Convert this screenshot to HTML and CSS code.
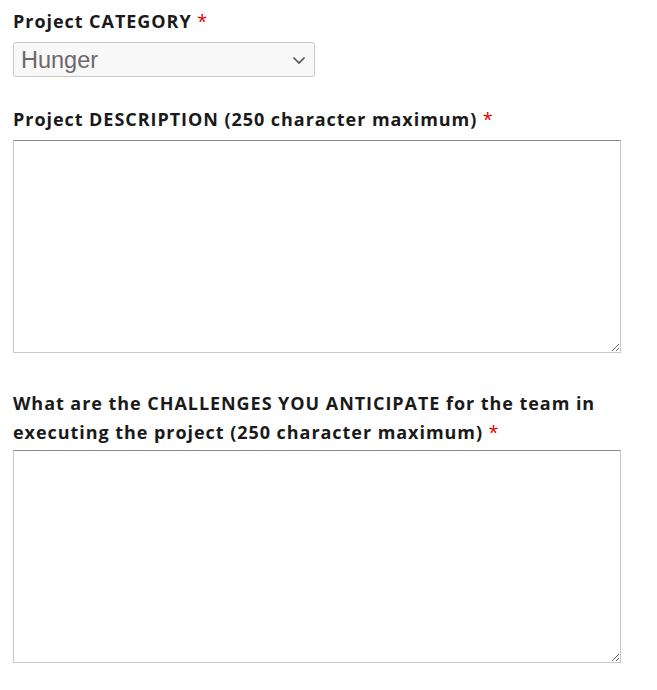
FILE: index.html
```html
<!DOCTYPE html>
<html>
<head>
<meta charset="utf-8">
<link rel="stylesheet" href="styles.css">
</head>
<body>
<form class="form">
  <div class="field">
    <label class="label">Project CATEGORY <span class="req">*</span></label>
    <div class="select-wrap">
      <select class="select"><option>Hunger</option></select>
      <svg class="chev" width="14" height="9" viewBox="0 0 14 9"><path d="M1.5 1.5 L7 7 L12.5 1.5" fill="none" stroke="#555" stroke-width="1.6"/></svg>
    </div>
  </div>
  <div class="field field-desc">
    <label class="label">Project DESCRIPTION (250 character maximum) <span class="req">*</span></label>
    <textarea class="area"></textarea>
  </div>
  <div class="field field-chal">
    <label class="label">What are the CHALLENGES YOU ANTICIPATE for the team in executing the project (250 character maximum) <span class="req">*</span></label>
    <textarea class="area"></textarea>
  </div>
</form>
</body>
</html>
```
FILE: styles.css
```css
html, body { margin: 0; padding: 0; background: #fff; }
body { padding: 7px 13px 0 13px; }
.form { display: flex; flex-direction: column; width: 608px; }
.field { display: flex; flex-direction: column; }
.field-desc { margin-top: 28px; }
.field-chal { margin-top: 36px; }
.field-chal .label { margin-bottom: 3px; }
.label {
  font-family: "Open Sans", "DejaVu Sans", sans-serif;
  font-weight: 700;
  font-size: 18px;
  letter-spacing: 0.95px;
  line-height: 29px;
  color: #1a1a1a;
  margin-bottom: 6px;
}
.req { color: #e00000; font-weight: 400; }
.select-wrap { position: relative; width: 302px; height: 35px; }
.select {
  -webkit-appearance: none; appearance: none;
  width: 302px; height: 35px; box-sizing: border-box;
  border: 1px solid #c8c8c8; border-radius: 3px;
  background: #f8f8f8;
  font-family: "Liberation Sans", Arial, sans-serif;
  font-size: 23.5px; color: #6a6a6a;
  padding: 0 0 0 7px;
}
.chev { position: absolute; right: 9px; top: 14px; pointer-events: none; }
.area {
  width: 608px; height: 213px; box-sizing: border-box;
  border: 1px solid #c9c9c9; border-top-color: #8a8a8a;
  margin: 0; padding: 4px; display: block; resize: vertical;
  background: #fff;
}
```
